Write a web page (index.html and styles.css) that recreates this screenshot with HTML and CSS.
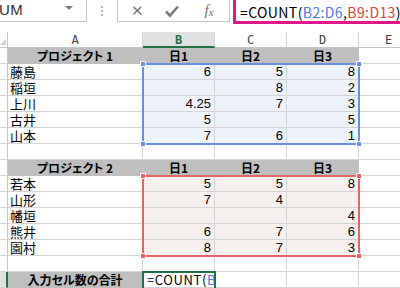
FILE: index.html
```html
<!DOCTYPE html>
<html lang="ja">
<head>
    <meta charset="UTF-8">
    <title>COUNT</title>
    <link rel="stylesheet" href="styles.css">
</head>
<body>
    <div class="formula-bar">
        <div class="name-box">
            <span class="name-text">UM</span>
            <span class="drop-arrow"></span>
        </div>
        <div class="grip"><span></span><span></span><span></span></div>
        <div class="fx-buttons">
            <span class="fx-btn cancel">&#x2715;</span>
            <span class="fx-btn enter">
                <svg width="16" height="14" viewBox="0 0 16 14"><path d="M2 7.5 L6 11.5 L14 2.5" fill="none" stroke="#7a7a7a" stroke-width="2.6"/></svg>
            </span>
            <span class="fx-btn func"><i>f</i><i class="x">x</i></span>
        </div>
        <div class="formula-input">
            =COUNT(<span class="ref-blue">B2:D6</span>,<span class="ref-red">B9:D13</span>)<span class="caret"></span>
        </div>
    </div>

    <div class="sheet-wrap">
        <div class="sheet">
            <!-- column headers -->
            <div class="corner"><span class="tri"></span></div>
            <div class="col-head">A</div>
            <div class="col-head active">B</div>
            <div class="col-head">C</div>
            <div class="col-head">D</div>
            <div class="col-head last">E</div>

            <!-- project 1 -->
            <div class="rh"></div>
            <div class="cell hdr">プロジェクト 1</div>
            <div class="cell hdr">日1</div>
            <div class="cell hdr">日2</div>
            <div class="cell hdr">日3</div>
            <div class="cell"></div>

            <div class="rh"></div>
            <div class="cell name">藤島</div>
            <div class="cell num blue">6</div>
            <div class="cell num blue">5</div>
            <div class="cell num blue">8</div>
            <div class="cell"></div>

            <div class="rh"></div>
            <div class="cell name">稲垣</div>
            <div class="cell num blue"></div>
            <div class="cell num blue">8</div>
            <div class="cell num blue">2</div>
            <div class="cell"></div>

            <div class="rh"></div>
            <div class="cell name">上川</div>
            <div class="cell num blue">4.25</div>
            <div class="cell num blue">7</div>
            <div class="cell num blue">3</div>
            <div class="cell"></div>

            <div class="rh"></div>
            <div class="cell name">古井</div>
            <div class="cell num blue">5</div>
            <div class="cell num blue"></div>
            <div class="cell num blue">5</div>
            <div class="cell"></div>

            <div class="rh"></div>
            <div class="cell name">山本</div>
            <div class="cell num blue">7</div>
            <div class="cell num blue">6</div>
            <div class="cell num blue">1</div>
            <div class="cell"></div>

            <div class="rh"></div>
            <div class="cell"></div>
            <div class="cell"></div>
            <div class="cell"></div>
            <div class="cell"></div>
            <div class="cell"></div>

            <!-- project 2 -->
            <div class="rh"></div>
            <div class="cell hdr">プロジェクト 2</div>
            <div class="cell hdr">日1</div>
            <div class="cell hdr">日2</div>
            <div class="cell hdr">日3</div>
            <div class="cell"></div>

            <div class="rh"></div>
            <div class="cell name">若本</div>
            <div class="cell num red">5</div>
            <div class="cell num red">5</div>
            <div class="cell num red">8</div>
            <div class="cell"></div>

            <div class="rh"></div>
            <div class="cell name">山形</div>
            <div class="cell num red">7</div>
            <div class="cell num red">4</div>
            <div class="cell num red"></div>
            <div class="cell"></div>

            <div class="rh"></div>
            <div class="cell name">幡垣</div>
            <div class="cell num red"></div>
            <div class="cell num red"></div>
            <div class="cell num red">4</div>
            <div class="cell"></div>

            <div class="rh"></div>
            <div class="cell name">熊井</div>
            <div class="cell num red">6</div>
            <div class="cell num red">7</div>
            <div class="cell num red">6</div>
            <div class="cell"></div>

            <div class="rh"></div>
            <div class="cell name">園村</div>
            <div class="cell num red">8</div>
            <div class="cell num red">7</div>
            <div class="cell num red">3</div>
            <div class="cell"></div>

            <div class="rh"></div>
            <div class="cell"></div>
            <div class="cell"></div>
            <div class="cell"></div>
            <div class="cell"></div>
            <div class="cell"></div>

            <!-- total -->
            <div class="rh active"></div>
            <div class="cell hdr total">入力セル数の合計</div>
            <div class="cell edit"><span class="edit-text">=COUNT(<span class="ref-blue">B2:D6</span>,<span class="ref-red">B9:D13</span>)</span></div>
            <div class="cell"></div>
            <div class="cell"></div>
            <div class="cell"></div>
        </div>

        <!-- reference highlights -->
        <div class="range range-blue">
            <span class="handle tl"></span><span class="handle tr"></span>
            <span class="handle bl"></span><span class="handle br"></span>
        </div>
        <div class="range range-red">
            <span class="handle tl"></span><span class="handle tr"></span>
            <span class="handle bl"></span><span class="handle br"></span>
        </div>
        <div class="active-cell"></div>
    </div>
</body>
</html>
```

FILE: styles.css
```css
* {
    box-sizing: border-box;
}

body, html {
    margin: 0;
    padding: 0;
    background: #fff;
    color: #000;
    font-family: "Liberation Sans", "Noto Sans CJK JP", sans-serif;
    overflow: hidden;
}

/* formula bar */
.formula-bar {
    display: flex;
    height: 27px;
    align-items: flex-start;
}

.name-box {
    flex: 0 0 87px;
    height: 22px;
    border: 1px solid #c6c6c6;
    border-left: none;
    border-top: none;
    display: flex;
    align-items: center;
    justify-content: space-between;
    padding: 0 13px 2px 0;
}

.name-text {
    font-size: 15px;
    color: #333;
    margin-left: -1px;
    letter-spacing: 0.5px;
}

.drop-arrow {
    width: 0;
    height: 0;
    border-left: 4px solid transparent;
    border-right: 4px solid transparent;
    border-top: 4px solid #7a7a7a;
    margin-top: -4px;
}

.grip {
    flex: 0 0 30px;
    height: 22px;
    display: flex;
    flex-direction: column;
    align-items: center;
    justify-content: center;
    gap: 2px;
}

.grip span {
    width: 2px;
    height: 2px;
    background: #b4b4b4;
}

.fx-buttons {
    flex: 0 0 113px;
    height: 22px;
    border: 1px solid #c6c6c6;
    border-top: none;
    display: flex;
    align-items: center;
    padding-left: 13px;
}

.fx-btn {
    color: #7a7a7a;
    display: flex;
    justify-content: center;
    align-items: center;
}

.fx-btn.cancel {
    font-size: 15px;
    width: 12px;
    margin-right: 21px;
}

.fx-btn.enter {
    width: 16px;
    margin-right: 21px;
}

.fx-btn.func {
    width: 16px;
    font-family: "Liberation Serif", serif;
    font-size: 15px;
    color: #6e6e6e;
}

.fx-btn.func .x {
    font-size: 11px;
    margin-top: 3px;
}

.formula-input {
    flex: 1;
    min-width: 0;
    height: 27px;
    margin-left: 3px;
    margin-top: -3px;
    border: 3px solid #e0178a;
    border-right: none;
    padding: 2px 0 0 4px;
    font-family: "Noto Sans CJK JP", sans-serif;
    font-size: 14px;
    line-height: 20px;
    letter-spacing: 0.4px;
    white-space: nowrap;
    overflow: hidden;
    color: #000;
}

.caret {
    display: inline-block;
    width: 1px;
    height: 16px;
    background: #000;
    vertical-align: -3px;
    margin-left: 1px;
}

.ref-blue {
    color: #4a7be8;
}

.ref-red {
    color: #e0403a;
}

/* sheet */
.sheet-wrap {
    position: relative;
    margin-top: 5px;
}

.sheet {
    display: grid;
    grid-template-columns: 8px 135px 72px 72px 72px 60px;
    grid-auto-rows: 16px;
}

.corner {
    border-right: 1px solid #c6c6c6;
    border-bottom: 1px solid #c6c6c6;
    position: relative;
}

.corner .tri {
    position: absolute;
    right: 1px;
    bottom: 2px;
    width: 0;
    height: 0;
    border-left: 6px solid transparent;
    border-bottom: 6px solid #cfcfcf;
}

.col-head {
    font-size: 12px;
    text-align: center;
    line-height: 17px;
    color: #444;
    border-right: 1px solid #d4d4d4;
    border-bottom: 1px solid #c6c6c6;
    font-family: "DejaVu Sans Mono", monospace;
}

.col-head.active {
    background: #e1e1e1;
    color: #217346;
    font-weight: bold;
    border-bottom: 2px solid #217346;
}

.rh {
    border-right: 1px solid #c6c6c6;
    border-bottom: 1px solid #d4d4d4;
}

.rh.active {
    background: #e1e1e1;
    border-right: 2px solid #217346;
}

.cell {
    display: flex;
    align-items: center;
    border-right: 1px solid #d4d4d4;
    border-bottom: 1px solid #d4d4d4;
    font-size: 13px;
    line-height: 15px;
    white-space: nowrap;
}

.cell.hdr {
    justify-content: center;
    background: #bfbfbf;
    border-right-color: #bfbfbf;
    border-bottom-color: #bfbfbf;
    font-weight: bold;
    font-size: 12px;
    font-family: "Noto Sans CJK JP", sans-serif;
    font-feature-settings: "palt";
}

.cell.name {
    padding-left: 2px;
    font-family: "Noto Sans CJK JP", sans-serif;
}

.cell.num {
    justify-content: flex-end;
    padding-right: 3px;
}

.cell.blue {
    background: #eef2fb;
}

.cell.red {
    background: #f6f0ee;
}

.cell.edit {
    padding-left: 4px;
    overflow: hidden;
    font-family: "Noto Sans CJK JP", sans-serif;
    letter-spacing: 0.6px;
}

/* highlights over the grid */
.range {
    position: absolute;
    left: 142px;
    width: 218px;
    height: 82px;
    border: 2px solid;
}

.range-blue {
    top: 31px;
    border-color: #6a8ee6;
}

.range-red {
    top: 143px;
    border-color: #e56363;
}

.handle {
    position: absolute;
    width: 6px;
    height: 6px;
    border: 1px solid #fff;
}

.range-blue .handle {
    background: #6a8ee6;
}

.range-red .handle {
    background: #e56363;
}

.handle.tl { left: -4px; top: -4px; }
.handle.tr { right: -4px; top: -4px; }
.handle.bl { left: -4px; bottom: -4px; }
.handle.br { right: -4px; bottom: -4px; }

.active-cell {
    position: absolute;
    left: 142px;
    top: 239px;
    width: 74px;
    height: 20px;
    border: 2px solid #217346;
}
```
